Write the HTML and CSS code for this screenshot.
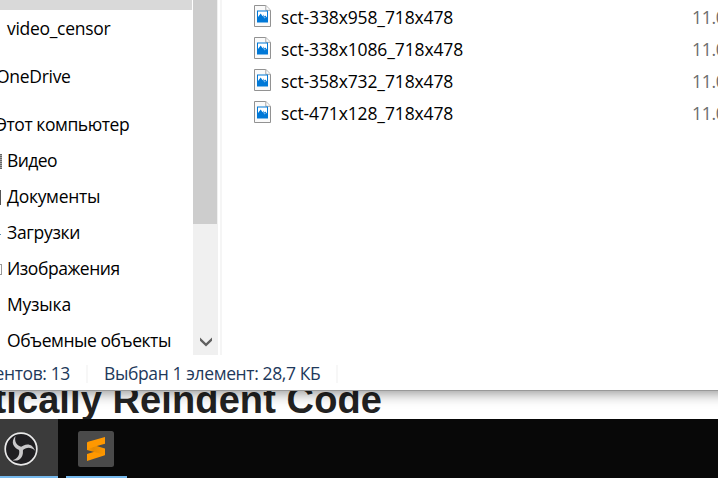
FILE: index.html
```
<!DOCTYPE html>
<html lang="ru">
<head>
<meta charset="utf-8">
<title>Проводник</title>
<link rel="stylesheet" href="styles.css">
</head>
<body>
<svg class="defs" width="0" height="0">
  <symbol id="picture" viewBox="0 0 17 22">
    <path d="M.5.5h11.3l4.7 4.7v16.3H.5z" fill="#fafafa" stroke="#929292"/>
    <path d="M11.8.7v4.6h4.6" fill="#fff" stroke="#a5a5a5"/>
    <path d="M3 5.500h11v12H3z" fill="#0078d7"/>
    <path d="M4 6.500h9v6.800l-1.200-1.300-1 .5-1.300-2.200-1 .9-1.800-2.600L4 12z" fill="#fff"/>
    <path d="m9.300 9.500 1.300 1.900.9-.8 1.500 2.200V14H9z" fill="#0078d7"/>
    <path d="m9 10 1.600 3 .9-.6" fill="none" stroke="#9ccdf3" stroke-width=".8"/>
  </symbol>
</svg>
<div class="screen">
  <section class="window">
    <div class="content">
      <nav class="tree">
        <div class="selected"></div>
        <div class="row"><span class="t-censor">video_censor</span></div>
        <div class="row root"><span class="t-drive">OneDrive</span></div>
        <div class="row root"><span class="t-pc">Этот компьютер</span></div>
        <div class="row"><i class="edge film"></i><span class="t-video">Видео</span></div>
        <div class="row"><i class="edge doc"></i><span class="t-docs">Документы</span></div>
        <div class="row"><i class="edge load"></i><span class="t-load">Загрузки</span></div>
        <div class="row"><i class="edge image"></i><span class="t-images">Изображения</span></div>
        <div class="row"><span class="t-music">Музыка</span></div>
        <div class="row"><span class="t-objects">Объемные объекты</span></div>
      </nav>
      <div class="scrollbar">
        <div class="thumb"></div>
        <svg class="arrow" width="12" height="10" viewBox="0 0 12 10"><path d="M0 .5 6 6.3 12 .5v3.2L6 9.5 0 3.7z" fill="#606060"/></svg>
      </div>
      <div class="splitter"></div>
      <div class="files">
        <div class="file"><svg class="icon"><use href="#picture"/></svg><span class="name">sct-338x958_718x478</span><span class="date">11.0</span></div>
        <div class="file"><svg class="icon"><use href="#picture"/></svg><span class="name">sct-338x1086_718x478</span><span class="date">11.0</span></div>
        <div class="file"><svg class="icon"><use href="#picture"/></svg><span class="name">sct-358x732_718x478</span><span class="date">11.0</span></div>
        <div class="file"><svg class="icon"><use href="#picture"/></svg><span class="name">sct-471x128_718x478</span><span class="date">11.0</span></div>
      </div>
    </div>
    <footer class="status">
      <div class="count"><span class="t-count">Элементов: 13</span></div>
      <div class="chosen"><span class="t-chosen">Выбран 1 элемент: 28,7 КБ</span></div>
    </footer>
  </section>
  <div class="page"><h1>Automatically Reindent Code</h1></div>
  <div class="taskbar">
    <div class="task active">
      <svg width="34" height="34" viewBox="0 0 34 34">
        <circle cx="17" cy="17" r="15.800" fill="#201f22" stroke="#e9e9e9" stroke-width="1.700"/>
        <g fill="#c9c8ca">
          <path id="blade" d="M16.500 18.500C9.500 16.500 6 10 11.500 4C10 10 13 13.500 17.500 15C19.200 15.500 19.500 17 18.800 18.500z"/>
          <use href="#blade" transform="rotate(120 17 17)"/>
          <use href="#blade" transform="rotate(240 17 17)"/>
        </g>
      </svg>
    </div>
    <div class="task sublime">
      <svg width="36" height="36" viewBox="0 0 36 36">
        <defs><linearGradient id="fold" x1="0" y1="0" x2="1" y2="0"><stop offset="0" stop-color="#ff9800"/><stop offset=".35" stop-color="#e68a02"/><stop offset="1" stop-color="#ff9800"/></linearGradient></defs>
        <rect width="36" height="36" rx="2.500" fill="#4a4a4a"/>
        <path d="M9 23 27 17.500v6c0 .5-.3.900-.9 1.100L9 30z" fill="#ff9800"/>
        <path d="M9 12 17 14.500 26 17.200c.7.300 1 .7 1 1.400v4.400c0 .7-.3 1-1 .8L9 19z" fill="url(#fold)"/>
        <path d="M9 12.300c0-.9.300-1.300 1.100-1.600L27 6v6.700L18 15.300l-9 3z" fill="#ff9800"/>
      </svg>
    </div>
  </div>
</div>
</body>
</html>
```
FILE: styles.css
```
* { box-sizing: border-box; }
body { margin: 0; overflow: hidden; background: #fff; }
.defs { position: absolute; }
.screen {
  width: 718px;
  height: 478px;
  overflow: hidden;
  display: flex;
  flex-direction: column;
  font: 17.5px/24px "Open Sans", "Noto Sans", sans-serif;
  color: #000;
}
.window {
  position: relative;
  z-index: 1;
  flex: 0 0 391px;
  margin: 0 -20px;
  padding: 0 20px;
  background: #fff;
  border-bottom: 1px solid #999;
  box-shadow: 0 2px 13px rgba(0, 0, 0, .45);
}
.content { display: flex; height: 355px; overflow: hidden; margin-left: -20px; padding-left: 20px; }
.tree { width: 193px; flex: none; white-space: nowrap; letter-spacing: -.3px; }
.selected { width: 192px; height: 10px; margin-bottom: 1px; background: #d9d9d9; }
.row { display: flex; align-items: center; height: 36px; padding: 0 0 2px 7px; position: relative; }
.row.root { margin: 12px 0; padding-left: 0; }
.row.root + .root { margin-bottom: 0; }
.row.root span { margin-left: -4px; }
.row span { display: block; }
.t-pc, .t-images, .t-objects { letter-spacing: -.45px; }
.t-video { letter-spacing: -.6px; }
.t-music { letter-spacing: -.2px; }
.edge { position: absolute; left: 0; top: 11px; height: 15px; }
.film { width: 2px; background: repeating-linear-gradient(#666 0 1px, #aaa 1px 2px); }
.doc { width: 1px; background: #555; }
.load { width: 1px; height: 1px; top: 19px; background: #5b91b5; }
.image { width: 2px; height: 11px; top: 13px; border: 1px solid #999; border-left: 0; }
.scrollbar {
  width: 25px;
  flex: none;
  background: #f0f0f0;
  display: flex;
  flex-direction: column;
  justify-content: space-between;
}
.thumb { width: 24px; height: 224px; background: #cdcdcd; }
.arrow { margin: 0 0 8px 6.5px; }
.splitter { width: 2px; margin-left: 2px; background: #f5f5f5; }
.files { flex: 1; padding-top: 2px; }
.file { display: flex; align-items: center; height: 32px; padding: 0 0 2px 32px; }
.icon { width: 17px; height: 22px; margin-top: -2px; }
.name { width: 411px; margin-left: 10px; letter-spacing: -.13px; }
.date { width: 26px; overflow: hidden; color: #6d6d6d; letter-spacing: -.3px; }
.status { display: flex; height: 35px; align-items: center; padding-top: 2px; color: #1e395b; white-space: nowrap; letter-spacing: -.38px; }
.count { width: 88px; padding-right: 16px; display: flex; justify-content: flex-end; }
.count, .chosen { height: 18px; line-height: 16px; border-right: 2px solid #f7f7f7; }
.chosen { width: 250px; padding-left: 16px; }
.page { flex: 0 0 28px; background: #fff; overflow: hidden; display: flex; }
h1 {
  width: 382px;
  flex: none;
  display: flex;
  justify-content: flex-end;
  margin: -13px 0 0;
  font: bold 38px/44px "Liberation Sans", sans-serif;
  letter-spacing: .1px;
  color: #222;
  white-space: nowrap;
}
.taskbar { flex: 1; display: flex; background: #080808; }
.task { height: 59px; border-bottom: 2px solid #76b9ed; }
.active { width: 58px; padding: 13px 0 0 4px; background: #3b3b3b; }
.sublime { width: 61px; margin-left: 8px; padding: 12px 0 0 12px; }
```
